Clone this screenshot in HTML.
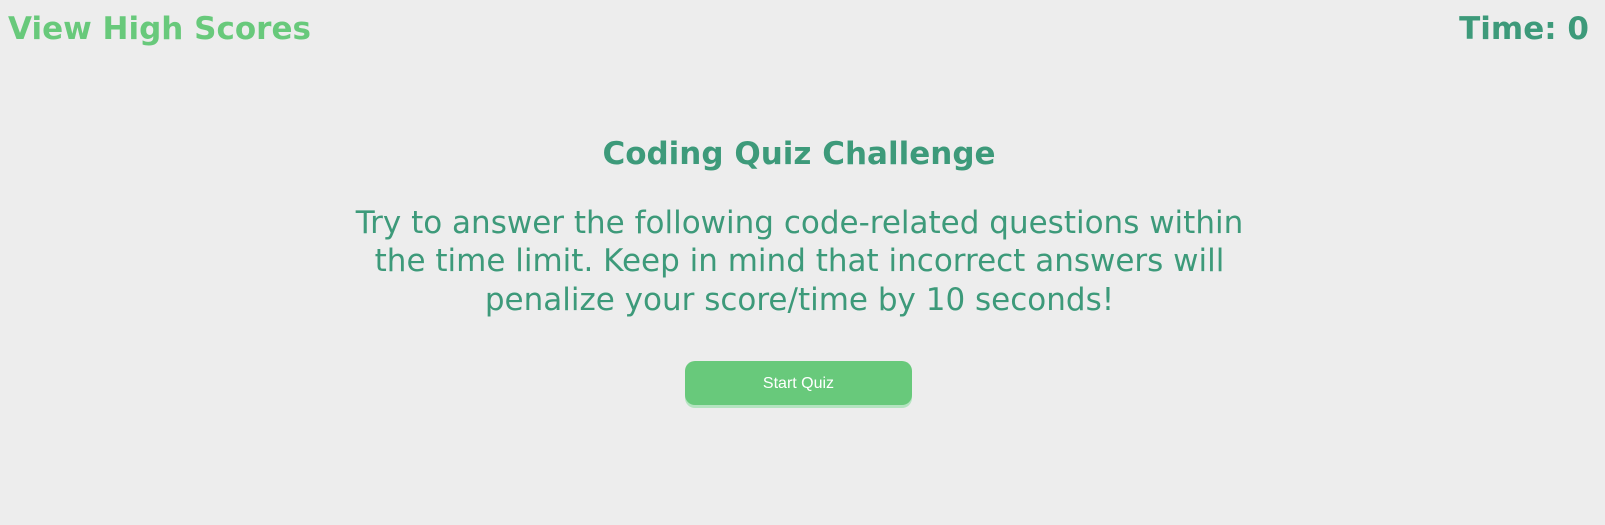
<!DOCTYPE html>
<html><head><meta charset="utf-8"><style>
body{margin:0;background:#ededed;width:1605px;height:525px;overflow:hidden;font-family:"DejaVu Sans",Verdana,sans-serif;}
.wrap{position:relative;width:1605px;height:525px;}
.hs{position:absolute;left:8px;top:11px;font-size:31px;font-weight:bold;color:#68c97b;}
.time{position:absolute;right:16px;top:11px;font-size:31px;font-weight:bold;color:#3d9a7a;}
h1{position:absolute;left:0;width:1598px;top:136px;margin:0;text-align:center;font-size:31px;font-weight:bold;color:#3d9a7a;}
p{position:absolute;left:337px;width:925px;top:204px;margin:0;text-align:center;font-size:31px;line-height:38.4px;color:#3d9a7a;}
.btn{position:absolute;left:685px;top:361px;width:227px;height:44px;background:#68c97b;border-radius:10px;box-shadow:0 3px 0 #b4e4c0;color:#fff;font-family:"Liberation Sans",Arial,sans-serif;font-size:16px;text-align:center;line-height:46px;}
</style></head><body><div class="wrap">
<div class="hs">View High Scores</div>
<div class="time">Time: 0</div>
<h1>Coding Quiz Challenge</h1>
<p>Try to answer the following code-related questions within the time limit. Keep in mind that incorrect answers will penalize your score/time by 10 seconds!</p>
<div class="btn">Start Quiz</div>
</div></body></html>
